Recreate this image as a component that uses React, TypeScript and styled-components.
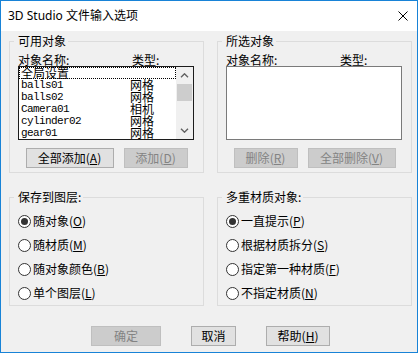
import React from "react";
import styled, { createGlobalStyle } from "styled-components";

const Global = createGlobalStyle`
  html, body { margin: 0; padding: 0; background: #ffffff; }
  body {
    font-family: "Noto Sans CJK SC", "Noto Sans", sans-serif;
    font-size: 12px;
    color: #000000;
  }
  * { box-sizing: border-box; }
`;

const Window = styled.div`
  width: 418px;
  height: 353px;
  border: 1px solid #1883d7;
  background: #f0f0f0;
  display: flex;
  flex-direction: column;
`;

const TitleBar = styled.div`
  height: 30px;
  flex: none;
  background: #ffffff;
  display: flex;
  align-items: center;
  justify-content: space-between;
  padding: 0 9px 0 7px;
`;

const TitleText = styled.div`
  font-family: "Noto Sans", "Noto Sans CJK SC", sans-serif;
  font-size: 12px;
  line-height: 16px;
  white-space: nowrap;
`;

const Client = styled.div`
  flex: 1;
  display: flex;
  flex-direction: column;
  padding: 10px 5px 0 8px;
`;

const GroupGrid = styled.div`
  display: grid;
  grid-template-columns: 195px 195px;
  grid-template-rows: 132px 109px;
  column-gap: 13px;
  row-gap: 24px;
`;

const Group = styled.div`
  border: 1px solid #dcdcdc;
  display: flex;
  flex-direction: column;
  padding: 0 8px;
`;

const GroupTitle = styled.div`
  align-self: flex-start;
  margin: -8px 0 0 -4px;
  padding: 0 2px 0 4px;
  line-height: 14px;
  height: 14px;
  background: #f0f0f0;
  white-space: nowrap;
`;

const ColumnHeader = styled.div`
  display: grid;
  grid-template-columns: 114px auto;
  margin-top: 6px;
  height: 12px;
  line-height: 12px;
  white-space: nowrap;
`;

const ListBox = styled.div<{ $focused?: boolean }>`
  width: 176px;
  height: 74px;
  flex: none;
  border: 1px solid ${(p) => (p.$focused ? "#1c1c1c" : "#7a7a7a")};
  background: #ffffff;
  display: flex;
`;

const Rows = styled.div`
  flex: 1;
  display: flex;
  flex-direction: column;
  overflow: hidden;
`;

const Row = styled.div<{ $focus?: boolean }>`
  height: 12px;
  flex: none;
  display: grid;
  grid-template-columns: 109px 1fr;
  padding-left: 2px;
  line-height: 12px;
  white-space: nowrap;
  ${(p) => (p.$focus ? "outline: 1px dotted #000; outline-offset: -1px;" : "")}
`;

const NameCell = styled.span<{ $cjk?: boolean }>`
  font-family: ${(p) =>
    p.$cjk ? '"Noto Sans CJK SC", sans-serif' : '"Liberation Mono", "Noto Sans CJK SC", monospace'};
  font-size: ${(p) => (p.$cjk ? "12px" : "11px")};
  letter-spacing: ${(p) => (p.$cjk ? "0" : "-0.6px")};
`;

const TypeCell = styled.span`
  font-size: 12px;
`;

const ScrollBar = styled.div`
  width: 17px;
  flex: none;
  background: #f0f0f0;
  display: flex;
  flex-direction: column;
`;

const ScrollArrow = styled.div`
  height: 17px;
  flex: none;
  display: flex;
  align-items: center;
  justify-content: center;
`;

const Thumb = styled.div`
  height: 17px;
  flex: none;
  margin: 0 1px;
  background: #cdcdcd;
`;

const Track = styled.div`
  flex: 1;
`;

const ButtonRow = styled.div`
  display: flex;
  justify-content: center;
  gap: 10px;
  margin-top: 8px;
`;

const Button = styled.button<{ $w: number }>`
  width: ${(p) => p.$w}px;
  height: 20px;
  flex: none;
  padding: 0;
  border: 1px solid #adadad;
  background: #e1e1e1;
  color: #000000;
  font-family: "Noto Sans CJK SC", "Noto Sans", sans-serif;
  font-size: 12px;
  line-height: 18px;
  white-space: nowrap;
  &:disabled {
    background: #cccccc;
    border-color: #bfbfbf;
    color: #838383;
  }
`;

const RadioList = styled.div`
  display: flex;
  flex-direction: column;
  margin-top: 5px;
`;

const RadioRow = styled.label`
  height: 24px;
  display: flex;
  align-items: center;
  gap: 2px;
  line-height: 14px;
  white-space: nowrap;
`;

const RadioCircle = styled.span<{ $checked?: boolean }>`
  width: 13px;
  height: 13px;
  flex: none;
  border-radius: 50%;
  border: 1px solid #333333;
  background: #ffffff;
  display: flex;
  align-items: center;
  justify-content: center;
  &::after {
    content: "";
    width: 7px;
    height: 7px;
    border-radius: 50%;
    background: #333333;
    display: ${(p) => (p.$checked ? "block" : "none")};
  }
`;

const DialogButtons = styled.div`
  display: flex;
  gap: 30px;
  margin: 20px 0 0 82px;
`;

const Chevron = ({ down }: { down?: boolean }) => (
  <svg width="9" height="5" viewBox="0 0 9 5">
    <path
      d={down ? "M1 0.8 L4.5 4.2 L8 0.8" : "M1 4.2 L4.5 0.8 L8 4.2"}
      fill="none"
      stroke="#606060"
      strokeWidth="1.4"
    />
  </svg>
);

const CloseIcon = () => (
  <svg width="10" height="10" viewBox="0 0 10 10">
    <path d="M0.5 0.5 L9.5 9.5 M9.5 0.5 L0.5 9.5" stroke="#000" strokeWidth="1" />
  </svg>
);

const Mn = ({ label, k }: { label: string; k: string }) => (
  <>
    {label}(<u>{k}</u>)
  </>
);

const items: { name: string; type: string; cjk?: boolean }[] = [
  { name: "全局设置", type: "", cjk: true },
  { name: "balls01", type: "网格" },
  { name: "balls02", type: "网格" },
  { name: "Camera01", type: "相机" },
  { name: "cylinder02", type: "网格" },
  { name: "gear01", type: "网格" },
];

const Radio = ({ checked, children }: { checked?: boolean; children: React.ReactNode }) => (
  <RadioRow>
    <RadioCircle $checked={checked} />
    <span>{children}</span>
  </RadioRow>
);

export default function App() {
  return (
    <>
      <Global />
      <Window>
        <TitleBar>
          <TitleText>3D Studio 文件输入选项</TitleText>
          <CloseIcon />
        </TitleBar>
        <Client>
          <GroupGrid>
            <Group>
              <GroupTitle>可用对象</GroupTitle>
              <ColumnHeader>
                <span>对象名称:</span>
                <span>类型:</span>
              </ColumnHeader>
              <ListBox $focused>
                <Rows>
                  {items.map((it, i) => (
                    <Row key={it.name} $focus={i === 0}>
                      <NameCell $cjk={it.cjk}>{it.name}</NameCell>
                      <TypeCell>{it.type}</TypeCell>
                    </Row>
                  ))}
                </Rows>
                <ScrollBar>
                  <ScrollArrow>
                    <Chevron />
                  </ScrollArrow>
                  <Thumb />
                  <Track />
                  <ScrollArrow>
                    <Chevron down />
                  </ScrollArrow>
                </ScrollBar>
              </ListBox>
              <ButtonRow>
                <Button $w={88}>
                  <Mn label="全部添加" k="A" />
                </Button>
                <Button $w={64} disabled>
                  <Mn label="添加" k="D" />
                </Button>
              </ButtonRow>
            </Group>

            <Group>
              <GroupTitle>所选对象</GroupTitle>
              <ColumnHeader>
                <span>对象名称:</span>
                <span>类型:</span>
              </ColumnHeader>
              <ListBox />
              <ButtonRow>
                <Button $w={64} disabled>
                  <Mn label="删除" k="R" />
                </Button>
                <Button $w={88} disabled>
                  <Mn label="全部删除" k="V" />
                </Button>
              </ButtonRow>
            </Group>

            <Group>
              <GroupTitle>保存到图层:</GroupTitle>
              <RadioList>
                <Radio checked>
                  <Mn label="随对象" k="O" />
                </Radio>
                <Radio>
                  <Mn label="随材质" k="M" />
                </Radio>
                <Radio>
                  <Mn label="随对象颜色" k="B" />
                </Radio>
                <Radio>
                  <Mn label="单个图层" k="L" />
                </Radio>
              </RadioList>
            </Group>

            <Group>
              <GroupTitle>多重材质对象:</GroupTitle>
              <RadioList>
                <Radio checked>
                  <Mn label="一直提示" k="P" />
                </Radio>
                <Radio>
                  <Mn label="根据材质拆分" k="S" />
                </Radio>
                <Radio>
                  <Mn label="指定第一种材质" k="F" />
                </Radio>
                <Radio>
                  <Mn label="不指定材质" k="N" />
                </Radio>
              </RadioList>
            </Group>
          </GroupGrid>

          <DialogButtons>
            <Button $w={70} disabled>
              确定
            </Button>
            <Button $w={45}>取消</Button>
            <Button $w={64}>
              <Mn label="帮助" k="H" />
            </Button>
          </DialogButtons>
        </Client>
      </Window>
    </>
  );
}
